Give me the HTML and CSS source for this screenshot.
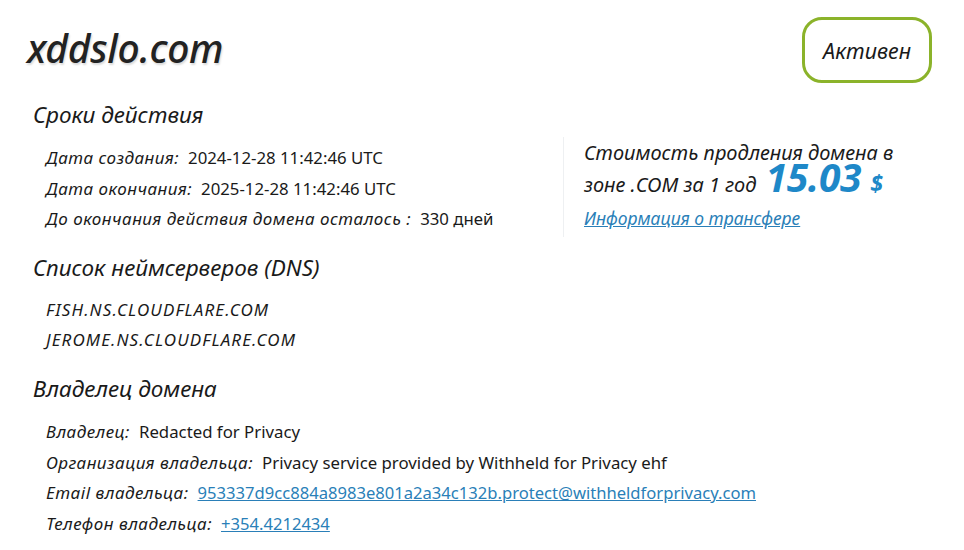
FILE: index.html
```html
<!DOCTYPE html>
<html lang="ru">
<head>
<meta charset="utf-8">
<link rel="stylesheet" href="styles.css">
</head>
<body>
<div class="page">
  <header class="head">
    <h1 class="domain">xddslo.com</h1>
    <div class="status">Активен</div>
  </header>
  <div class="top">
    <section class="left">
      <h2 class="sec">Сроки действия</h2>
      <div class="rows">
        <div class="row"><span class="lbl">Дата создания:</span><span class="val">2024-12-28 11:42:46 UTC</span></div>
        <div class="row"><span class="lbl">Дата окончания:</span><span class="val">2025-12-28 11:42:46 UTC</span></div>
        <div class="row"><span class="lbl">До окончания действия домена осталось :</span><span class="val">330 дней</span></div>
      </div>
    </section>
    <aside class="price">
      <p class="price-text">Стоимость продления домена в зоне .COM за 1 год <span class="amount">15.03</span><span class="cur">$</span></p>
      <a class="transfer" href="#">Информация о трансфере</a>
    </aside>
  </div>
  <h2 class="sec">Список неймсерверов (DNS)</h2>
  <div class="rows ns">
    <div class="row">FISH.NS.CLOUDFLARE.COM</div>
    <div class="row">JEROME.NS.CLOUDFLARE.COM</div>
  </div>
  <h2 class="sec">Владелец домена</h2>
  <div class="rows">
    <div class="row"><span class="lbl">Владелец:</span><span class="val">Redacted for Privacy</span></div>
    <div class="row"><span class="lbl">Организация владельца:</span><span class="val">Privacy service provided by Withheld for Privacy ehf</span></div>
    <div class="row"><span class="lbl">Email владельца:</span><a class="val link" href="#">953337d9cc884a8983e801a2a34c132b.protect@withheldforprivacy.com</a></div>
    <div class="row"><span class="lbl">Телефон владельца:</span><a class="val link" href="#">+354.4212434</a></div>
  </div>
</div>
</body>
</html>
```

FILE: styles.css
```css
* { box-sizing: border-box; }
html, body { margin: 0; padding: 0; background: #fff; }
body {
  font-family: "Noto Sans", "Open Sans", sans-serif;
  color: #1a1a1a;
}
.page {
  padding: 17px 32px 0 27px;
}
.head {
  display: flex;
  justify-content: space-between;
  align-items: flex-start;
  margin-bottom: 17px;
}
.domain {
  margin: 9px 0 0 0;
  font-size: 39px;
  line-height: 44px;
  font-style: italic;
  font-weight: 500;
  color: #222;
  letter-spacing: -0.3px;
  text-shadow: 1px 2px 2px rgba(0,0,0,0.15);
}
.status {
  width: 130px;
  height: 66px;
  border: 3px solid #8bb32a;
  border-radius: 20px;
  display: flex;
  align-items: center;
  justify-content: center;
  font-style: italic;
  font-size: 21.5px;
  color: #1a1a1a;
}
.top {
  display: flex;
}
.left {
  width: 536px;
}
.sec {
  margin: 0 0 0 6px;
  font-size: 22.5px;
  line-height: 30px;
  font-weight: 400;
  font-style: italic;
  color: #1a1a1a;
}
.rows {
  padding: 12px 0 19px 19px;
  display: flex;
  flex-direction: column;
}
.row {
  height: 30.7px;
  line-height: 31px;
  font-size: 17px;
  white-space: nowrap;
}
.ns {
  padding-top: 12px;
}
.ns .row {
  height: 30px;
  line-height: 30px;
  font-style: italic;
  letter-spacing: 1.1px;
}
.lbl {
  font-style: italic;
  letter-spacing: 0.5px;
  margin-right: 9px;
}
.val {
  color: #1a1a1a;
  font-size: 16.8px;
}
.link {
  color: #2a7fb8;
  text-decoration: underline;
  font-size: 16.6px;
}
.price {
  margin-top: 37px;
  border-left: 1px solid #eef0f2;
  padding: 0 0 0 20px;
  height: 100px;
  width: 360px;
}
.price-text {
  margin: 0;
  font-style: italic;
  font-size: 20px;
  line-height: 32px;
  color: #1a1a1a;
}
.amount {
  font-size: 39px;
  line-height: 0;
  font-weight: 700;
  color: #1e88c8;
  margin-left: 4px;
  letter-spacing: -0.3px;
}
.cur {
  font-size: 23px;
  line-height: 0;
  font-weight: 700;
  color: #1e88c8;
  margin-left: 9px;
}
.transfer {
  display: block;
  margin-top: 6px;
  font-style: italic;
  font-size: 17.5px;
  line-height: 22px;
  color: #2a7fb8;
  text-decoration: underline;
}
```
